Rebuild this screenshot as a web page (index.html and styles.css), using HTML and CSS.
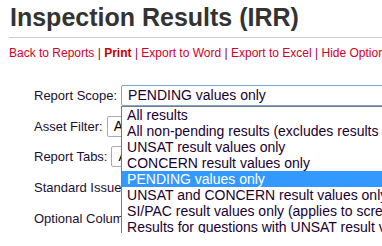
FILE: index.html
```html
<!DOCTYPE html>
<html lang="en">
<head>
    <meta charset="UTF-8">
    <title>Inspection Results (IRR)</title>
    <link rel="stylesheet" href="styles.css">
</head>
<body>
    <h1>Inspection Results (IRR)</h1>
    <div class="toolbar">
        <a href="#">Back to Reports</a> <span class="sep">|</span>
        <a href="#" class="current">Print</a> <span class="sep">|</span>
        <a href="#">Export to Word</a> <span class="sep">|</span>
        <a href="#">Export to Excel</a> <span class="sep">|</span>
        <a href="#">Hide Options</a>
    </div>

    <div class="options">
        <div class="row">
            <label>Report Scope:</label>
            <div class="scope-wrap">
                <div class="select focused">PENDING values only</div>
                <ul class="dropdown">
                    <li>All results</li>
                    <li>All non-pending results (excludes results with PENDING values)</li>
                    <li>UNSAT result values only</li>
                    <li>CONCERN result values only</li>
                    <li class="active">PENDING values only</li>
                    <li>UNSAT and CONCERN result values only</li>
                    <li>SI/PAC result values only (applies to screening questions)</li>
                    <li>Results for questions with UNSAT result values</li>
                </ul>
            </div>
        </div>
        <div class="row">
            <label>Asset Filter:</label>
            <div class="select">All assets</div>
        </div>
        <div class="row">
            <label>Report Tabs:</label>
            <div class="select">All tabs</div>
        </div>
        <div class="row">
            <label>Standard Issues:</label>
        </div>
        <div class="row">
            <label>Optional Columns:</label>
        </div>
    </div>
</body>
</html>
```

FILE: styles.css
```css
* {
    margin: 0;
    padding: 0;
    box-sizing: border-box;
}

body {
    font-family: 'Liberation Sans', Arial, sans-serif;
    background-color: #fff;
    color: #222;
    padding: 0 0 0 9px;
    overflow: hidden;
}

h1 {
    font-size: 25px;
    font-weight: bold;
    color: #333;
    line-height: 30px;
    padding: 2px 0 0 1px;
    height: 38px;
    border-bottom: 1px solid #ccc;
    white-space: nowrap;
}

.toolbar {
    font-size: 12px;
    line-height: 16px;
    padding-top: 7px;
    white-space: nowrap;
    color: #800060;
}

.toolbar a {
    color: #d0002a;
    text-decoration: none;
}

.toolbar a.current {
    font-weight: bold;
    color: #c00000;
}

.options {
    padding: 19px 0 0 25px;
    font-size: 13px;
    color: #1a1030;
}

.row {
    display: flex;
    align-items: center;
    gap: 4px;
    height: 30.7px;
    white-space: nowrap;
}

.scope-wrap {
    position: relative;
}

.select {
    height: 21px;
    width: 300px;
    border: 1px solid #aaa;
    border-radius: 2px;
    font-size: 14px;
    line-height: 19px;
    padding-left: 6px;
    background: #fff;
    color: #000;
}

.select.focused {
    width: 290px;
    border-color: #7ea6d8;
    color: #1a0030;
}

.dropdown {
    position: absolute;
    left: 0;
    top: 21px;
    width: 290px;
    list-style: none;
    background: #fff;
    border: 1px solid #7a7a7a;
    font-size: 14px;
    line-height: 16px;
    padding-bottom: 1px;
    overflow: hidden;
    z-index: 10;
}

.dropdown li {
    padding-left: 5px;
    height: 16px;
    color: #1a0030;
}

.dropdown li.active {
    background: #3399ff;
    color: #fff;
}
```
